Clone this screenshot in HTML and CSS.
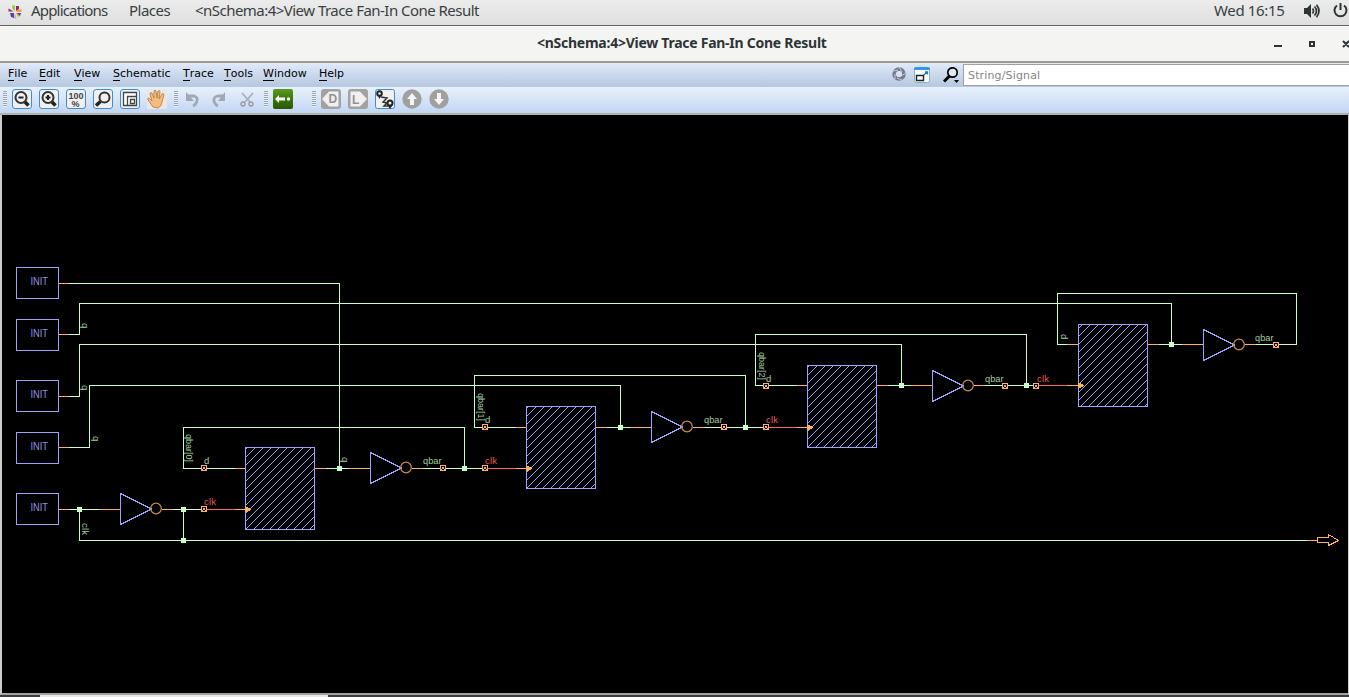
FILE: index.html
```
<!DOCTYPE html>
<html lang="en">
<head>
<meta charset="utf-8">
<title>nSchema</title>
<link rel="stylesheet" href="styles.css">
</head>
<body>
<header class="topbar">
  <svg class="distro" width="14" height="14" viewBox="0 0 14 14">
    <path fill="#9ccc35" d="M4 .5h3v5.500L4.500 4z"/><path fill="#932279" d="M8 1h3v3L8 6z"/>
    <path fill="#efa724" d="M13.500 4v3H8l2-2zM8 8h3l1 3-2 1z"/><path fill="#4b4a9f" d="M13 8 9 8l3 3zM2 8l4 0v5L3 12z"/>
    <path fill="#932279" d="M.5 3.500l5 3H.5z"/><path fill="#d9a0c8" d="M7 8l1.500 5.500H6z"/>
  </svg>
  <span class="apps">Applications</span>
  <span class="places">Places</span>
  <span class="appname">&lt;nSchema:4&gt;View Trace Fan-In Cone Result</span>
  <span class="clock">Wed 16:15</span>
  <svg class="sound" width="16" height="14" viewBox="0 0 16 14"><path fill="#2e3436" d="M0 4h3l4-4v14l-4-4H0z"/><path fill="none" stroke="#2e3436" stroke-width="1.700" d="M8.500 4.500q2 2.500 0 5M10.500 2.500q4 4.500 0 9M12.500.800q5 6.200 0 12.400"/></svg>
  <svg class="power" width="15" height="15" viewBox="0 0 15 15"><path fill="none" stroke="#2e3436" stroke-width="2" d="M4 2.500a6 6 0 1 0 7 0M7.500 0v7"/></svg>
</header>
<div class="titlebar">
  <span class="title">&lt;nSchema:4&gt;View Trace Fan-In Cone Result</span>
  <svg class="winbtns" width="76" height="10" viewBox="0 0 76 10"><path fill="#2e3436" d="M1 6h8v2H1z"/><path fill="none" stroke="#2e3436" stroke-width="2" d="M37 3h4v4h-4zM70 2l6 6M76 2l-6 6"/></svg>
</div>
<nav class="menubar">
  <span class="m file"><u>F</u>ile</span><span class="m edit"><u>E</u>dit</span><span class="m view"><u>V</u>iew</span><span class="m schematic"><u>S</u>chematic</span><span class="m trace"><u>T</u>race</span><span class="m tools"><u>T</u>ools</span><span class="m window"><u>W</u>indow</span><span class="m help"><u>H</u>elp</span>
  <svg class="aperture" width="14" height="15" viewBox="0 0 14 15"><circle cx="7" cy="7" r="4.700" fill="none" stroke="#777b91" stroke-width="4"/><circle cx="7" cy="7" r="3" fill="#dce4f0"/><path stroke="#c7d3e7" stroke-width=".9" d="M7 0l3 5M13.500 6l-4 3M10 13l-5-2M3 12V7M1 4l5-1"/></svg>
  <svg class="dock" width="16" height="16" viewBox="0 0 16 16"><rect x=".5" y=".5" width="15" height="15" rx="2" fill="#f8fafb" stroke="#8dafc5"/><path fill="#3396e8" d="M0 3V2q0-2 2-2h12q2 0 2 2v1z"/><path fill="none" stroke="#222" stroke-width="1.400" d="M2.500 8.500h7v5h-7z"/><path fill="none" stroke="#1b80b8" stroke-width="1.300" d="M10 8l3-3M11 5h2.500v2.500"/></svg>
  <i class="split"></i>
  <svg class="search" width="17" height="16" viewBox="0 0 17 16"><circle cx="9.500" cy="5.500" r="4.700" fill="#dfe9f6" stroke="#000" stroke-width="1.700"/><path stroke="#000" stroke-width="3" d="M6.500 9L1 14.500"/><path d="M11 13h5l-2.500 3z"/></svg>
  <div class="field">String/Signal</div>
</nav>
<div class="toolbar">
  <i class="grip g1"></i>
  <svg class="btn" viewBox="0 0 20 20"><rect class="face" x=".5" y=".5" width="19" height="19" rx="2.500"/><circle class="lens" cx="9" cy="8.500" r="5.500"/><path class="thick" d="M13 13l3.500 3.500"/><path class="bold" d="M6.500 8.500h5"/></svg>
  <svg class="btn" viewBox="0 0 20 20"><rect class="face" x=".5" y=".5" width="19" height="19" rx="2.500"/><circle class="lens" cx="9" cy="8.500" r="5.500"/><path class="thick" d="M13 13l3.500 3.500"/><path class="bold" d="M6.500 8.500h5M9 6v5"/></svg>
  <svg class="btn" viewBox="0 0 20 20"><rect class="face" x=".5" y=".5" width="19" height="19" rx="2.500"/><text class="pct" x="2.500" y="9.500" textLength="15">100</text><text class="pct" x="5.500" y="17.500">%</text></svg>
  <svg class="btn" viewBox="0 0 20 20"><rect class="face" x=".5" y=".5" width="19" height="19" rx="2.500"/><circle class="lens" cx="11.500" cy="8.500" r="5"/><path class="thick" d="M7.500 12.500L3 16.500"/></svg>
  <svg class="btn" viewBox="0 0 20 20"><rect class="face" x=".5" y=".5" width="19" height="19" rx="2.500"/><path fill="#fff" stroke="#444" stroke-width="1.300" d="M3.500 3.500h13v13h-13zM7.500 16V7.500H16M10.500 10.500h4v4h-4z"/></svg>
  <svg class="btn" viewBox="0 0 20 20"><path fill="#ebe7e6" d="M0 0h20v20H0z"/><path fill="#f5bd7b" stroke="#b07840" stroke-width=".8" d="M6 18L1 11q-1-2 1-2l3 3L3 5q0-2 2-1l2 5V2q1-2 2 0l1 7 1-7q2-1 2 1l-1 7 3-5q2-1 2 1l-2 7q0 4-4 6z"/></svg>
  <i class="grip g2"></i>
  <svg class="btn" viewBox="0 0 20 20"><path fill="none" stroke="#9fa9b6" stroke-width="2.800" d="M5 7h6q4 1 3 5t-4 5"/><path fill="#9fa9b6" d="M3 3v9h8z"/></svg>
  <svg class="btn" viewBox="0 0 20 20"><path fill="none" stroke="#9fa9b6" stroke-width="2.800" d="M13 7H8Q3 8 4 12t4 5"/><path fill="#9fa9b6" d="M15 3v9H8z"/></svg>
  <svg class="btn" viewBox="0 0 20 20"><path fill="none" stroke="#a4adb8" stroke-width="1.600" d="M5 4l8 9M16 4L8 13"/><circle cx="6" cy="15" r="2" fill="none" stroke="#999" stroke-width="1.300"/><circle cx="14" cy="15" r="2" fill="none" stroke="#999" stroke-width="1.300"/></svg>
  <i class="grip g3"></i>
  <svg class="btn" viewBox="0 0 20 20"><defs><linearGradient id="gr" x2="0" y2="1"><stop stop-color="#5c9b20"/><stop offset=".5" stop-color="#367808"/><stop offset="1" stop-color="#285703"/></linearGradient></defs><rect width="20" height="20" rx="2" fill="url(#gr)"/><path fill="#fff" d="M2 10l4-4v2.500h6v3H6V14z"/><circle cx="15.500" cy="10" r="1.700" fill="#fff"/></svg>
  <i class="grip g4"></i>
  <svg class="btn" viewBox="0 0 20 20"><rect width="20" height="20" rx="3" fill="#a2a2a2"/><path fill="#f0f0f0" d="M1 10l7-7.500h9.500v15H8z"/><text class="letter" x="7.500" y="14">D</text></svg>
  <svg class="btn" viewBox="0 0 20 20"><rect width="20" height="20" rx="3" fill="#a2a2a2"/><path fill="#f0f0f0" d="M2.500 2.500H12l7 7.500-7 7.500H2.500z"/><text class="letter" x="4" y="15">L</text></svg>
  <svg class="btn" viewBox="0 0 20 20"><rect class="face" x=".5" y=".5" width="19" height="19" rx="2"/><circle cx="4.500" cy="4.500" r="2.300" fill="none" stroke="#222" stroke-width="2"/><path fill="#222" d="M3 7h3l-1.500 3zM13 17h4l-2 3z"/><circle cx="15" cy="14" r="2.500" fill="none" stroke="#222" stroke-width="2"/><path fill="none" stroke="#333" stroke-width="1.500" d="M6 8l6 1-4 4 4 1-3 3h4"/></svg>
  <svg class="btn" viewBox="0 0 20 20"><circle cx="10" cy="10" r="9.700" fill="#a0a0a0"/><path fill="#f5f5f5" d="M10 4l5 6h-3v6H8v-6H5z"/></svg>
  <svg class="btn" viewBox="0 0 20 20"><circle cx="10" cy="10" r="9.700" fill="#a0a0a0"/><path fill="#f5f5f5" d="M10 16l5-6h-3V4H8v6H5z"/></svg>
</div>
<main class="canvas">
<svg class="schematic-view" width="1346" height="578" viewBox="2 115 1346 578">
  <defs>
    <pattern id="hatch" width="8" height="8" patternUnits="userSpaceOnUse"><path fill="#a0a0ff" d="M0 6h1v1H0zM1 5h1v1H1zM2 4h1v1H2zM3 3h1v1H3zM4 2h1v1H4zM5 1h1v1H5zM6 0h1v1H6zM7 7h1v1H7z"/></pattern>
    <g id="init"><path class="blue" d="M.5.500h42v31H.5z"/><text class="lbl init" x="14.500" y="18" textLength="17.500" lengthAdjust="spacingAndGlyphs">INIT</text></g>
    <g id="inv"><path class="blue" d="M.5.500v31L31.500 16z"/><circle class="bubble" cx="36" cy="15.500" r="5.300"/></g>
    <path id="node" fill="#c8ffc8" d="M-2-2h5v5h-5z"/>
    <g id="pin"><path fill="#ffb060" d="M-3-3h6v6h-6z"/><path fill="#000" d="M-2-2h4v1h-4zM-2-1h1v2h-1zM1-1h1v2h-1zM-1 1h2v1h-2z"/></g>
    <path id="clkin" fill="#ffb060" d="M0-2h3v1h2v1h1v1H5v1H3v1H0z"/>
  </defs>
  <use href="#init" x="16" y="267"/><use href="#init" x="16" y="319"/><use href="#init" x="16" y="380"/><use href="#init" x="16" y="432"/><use href="#init" x="16" y="493"/>

  <path class="green" d="M69 283.500H339.500V468.500M69 334.500H79.500V303.500H1171.500V344.500M69 396.500H79.500V344.500H901.500V385.500M69 447.500H89.500V385.500H620.500V427.500"/>
  <path class="green" d="M69 509.500H99M79.500 509.500V540.500H1307M173 509.500H204M183.500 509.500V540.500"/>
  <path class="green" d="M235 468.500H183.500V427.500H464.500V468.500M326 468.500H349M423 468.500H485"/>
  <path class="green" d="M516 427.500H474.500V375.500H745.500V427.500M607 427.500H630M704 427.500H766"/>
  <path class="green" d="M797 385.500H755.500V334.500H1026.500V385.500M888 385.500H911M985 385.500H1036"/>
  <path class="green" d="M1067 344.500H1057.500V293.500H1296.500V344.500H1256M1159 344.500H1182"/>
  <path class="red" d="M207 509.500H235M488 468.500H516M769 427.500H797M1039 385.500H1067"/>
  <path class="orange" d="M59 283.500H69M59 334.500H69M59 396.500H69M59 447.500H69M59 509.500H69M99 509.500H120M162 509.500H173M235 509.500H245M1307 540.500H1317"/>
  <path class="orange" d="M235 468.500H245M315 468.500H326M349 468.500H370M412 468.500H423M516 468.500H526"/>
  <path class="orange" d="M516 427.500H526M596 427.500H607M630 427.500H651M693 427.500H704M797 427.500H807"/>
  <path class="orange" d="M797 385.500H807M877 385.500H888M911 385.500H932M974 385.500H985M1067 385.500H1078"/>
  <path class="orange" d="M1067 344.500H1078M1148 344.500H1159M1182 344.500H1203M1245 344.500H1256"/>

  <rect class="cell" x="245.500" y="447.500" width="69" height="82"/>
  <rect class="cell" x="526.500" y="406.500" width="69" height="82"/>
  <rect class="cell" x="807.500" y="365.500" width="69" height="82"/>
  <rect class="cell" x="1078.500" y="324.500" width="69" height="82"/>
  <use href="#clkin" x="245" y="509"/><use href="#clkin" x="526" y="468"/><use href="#clkin" x="807" y="427"/><use href="#clkin" x="1078" y="385"/>
  <use href="#inv" x="120" y="493"/><use href="#inv" x="370" y="452"/><use href="#inv" x="651" y="411"/><use href="#inv" x="932" y="370"/><use href="#inv" x="1203" y="329"/>
  <use href="#node" x="79" y="509"/><use href="#node" x="183" y="509"/><use href="#node" x="183" y="540"/><use href="#node" x="339" y="468"/><use href="#node" x="464" y="468"/><use href="#node" x="620" y="427"/><use href="#node" x="745" y="427"/><use href="#node" x="901" y="385"/><use href="#node" x="1026" y="385"/><use href="#node" x="1171" y="344"/>
  <use href="#pin" x="204" y="468"/><use href="#pin" x="204" y="509"/><use href="#pin" x="443" y="468"/><use href="#pin" x="485" y="468"/><use href="#pin" x="485" y="427"/><use href="#pin" x="724" y="427"/><use href="#pin" x="766" y="427"/><use href="#pin" x="766" y="386"/><use href="#pin" x="1005" y="386"/><use href="#pin" x="1036" y="386"/><use href="#pin" x="1276" y="345"/>
  <path class="orange" d="M1317.500 537.500H1328.500V534.500L1338.500 540.500L1328.500 545.500V542.500H1317.500z"/>

  <g class="lbl">
    <text x="204" y="464">d</text><text x="485" y="423">d</text><text x="766" y="382">d</text>
    <text x="423" y="464" textLength="18.500" lengthAdjust="spacingAndGlyphs">qbar</text><text x="704" y="423" textLength="18.500" lengthAdjust="spacingAndGlyphs">qbar</text><text x="985" y="382" textLength="18.500" lengthAdjust="spacingAndGlyphs">qbar</text><text x="1255" y="341" textLength="18.500" lengthAdjust="spacingAndGlyphs">qbar</text>
    <text transform="translate(82 323) rotate(90)">q</text><text transform="translate(82 385) rotate(90)">q</text><text transform="translate(93 436) rotate(90)">q</text><text transform="translate(342 457) rotate(90)">q</text>
    <text transform="translate(82 523) rotate(90)" textLength="12">clk</text><text transform="translate(1061 334) rotate(90)">d</text>
    <text transform="translate(186 434) rotate(90)" textLength="28" lengthAdjust="spacingAndGlyphs">qbar[0]</text><text transform="translate(478 393) rotate(90)" textLength="28" lengthAdjust="spacingAndGlyphs">qbar[1]</text><text transform="translate(759 352) rotate(90)" textLength="28" lengthAdjust="spacingAndGlyphs">qbar[2]</text>
    <g class="clk"><text x="204" y="505" textLength="12">clk</text><text x="485" y="464" textLength="12">clk</text><text x="766" y="423" textLength="12">clk</text><text x="1037" y="382" textLength="12">clk</text></g>
  </g>
</svg>
</main>
<footer class="taskbar"><div class="task"></div></footer>
</body>
</html>
```
FILE: styles.css
```
* { box-sizing: border-box; }
body { margin: 0; width: 1349px; height: 697px; overflow: hidden; display: flex; flex-direction: column; background: #000; }
svg { flex: none; display: block; }
span { white-space: nowrap; flex: none; }

.topbar { height: 26px; display: flex; align-items: center; padding: 0 0 4px 8px; overflow: hidden; flex: none;
  background: linear-gradient(#ececec, #dfdfdf); border-bottom: 1px solid #5f605f; font: 15px "Noto Sans", sans-serif; color: #3a3f41; }
.topbar span { line-height: 19px; }
.distro { margin-right: 9px; margin-top: 2px; }
.apps { width: 98px; letter-spacing: -0.85px; }
.apps, .places { letter-spacing: -0.5px; }
.apps { letter-spacing: -0.85px; }
.places { width: 66px; }
.appname { letter-spacing: -0.53px; }
.clock { margin-left: auto; width: 90px; letter-spacing: -0.35px; }
.apps { letter-spacing: -0.82px; }
.sound { margin-right: 13px; }
.power { margin-right: 1px; }

.titlebar { height: 37px; flex: none; display: grid; grid-template-columns: 537px 1fr 76px; align-items: center; padding-bottom: 1px;
  background: #f4f4f3; border-top: 1px solid #fff; border-bottom: 2px solid #9a9b92; }
.title { grid-column: 2; font: bold 14px/20px "Noto Sans", sans-serif; letter-spacing: -0.26px; color: #2e3436; padding-bottom: 1px; }
.winbtns { grid-column: 3; }

.menubar { height: 24px; flex: none; display: flex; align-items: center; padding-left: 8px; overflow: hidden;
  background: linear-gradient(#e0eafa, #b7c8df); border-bottom: 1px solid #b3caea; font: 11px "DejaVu Sans", sans-serif; color: #000; }
.m { height: 17px; line-height: 15px; }
.m u { text-decoration: none; display: inline-block; height: 15px; border-bottom: 1px solid #000; }
.file { width: 31px; } .edit { width: 35px; } .view { width: 39px; } .schematic { width: 70px; }
.trace { width: 41px; } .tools { width: 39px; } .window { width: 56px; } .help { width: 30px; }
.aperture { margin-left: 543px; }
.dock { margin-left: 8px; margin-right: 8px; }
.split { width: 2px; height: 12px; background: #e8edf4; }
.search { margin-left: 5px; margin-right: 3px; }
.field { width: 400px; height: 22px; flex: none; background: #fff; border: 1px solid #a0a0a0; padding: 0 0 0 4px; line-height: 21px; color: #858585; letter-spacing: 0.15px; }

.toolbar { height: 28px; flex: none; display: flex; align-items: center; gap: 7px; padding: 0 0 2px 3px; background: linear-gradient(#e8f1fb, #c2d6f3 26px); border-bottom: 2px solid #b0b0ad; }
.btn { width: 20px; height: 20px; }
.grip { width: 4px; height: 16px; flex: none; background: repeating-linear-gradient(#9ca5af 0 1px, #e9eff7 1px 2px); }
.g1 { margin-right: -2px; }
.g2 { margin-right: -2px; }
.g3 { margin-right: -2px; }
.g4 { margin-left: 12px; margin-right: -2px; }
.face { fill: #f0f0f0; stroke: #3d8dcb; }
.lens { fill: none; stroke: #333; stroke-width: 2; }
.thick { stroke: #222; stroke-width: 3.5; }
.bold { stroke: #222; stroke-width: 2; }
.pct { font: bold 9px "Liberation Sans", sans-serif; fill: #444; }
.letter { font: bold 12px "Liberation Sans", sans-serif; fill: #929292; }

.canvas { height: 580px; flex: none; background: #000; border-left: 2px solid #ccc; border-right: 1px solid #ccc; border-bottom: 2px solid #a3a39c; }
.schematic-view { shape-rendering: crispEdges; }
.blue { fill: none; stroke: #a0a0ff; }
.green { fill: none; stroke: #c8ffc8; }
.red { fill: none; stroke: #ff6464; }
.orange { fill: none; stroke: #ffb060; }
.bubble { fill: none; stroke: #c88c50; stroke-width: 1.2; shape-rendering: geometricPrecision; }
.cell { fill: url(#hatch); stroke: #a0a0ff; }
.lbl { font: 9.5px "Liberation Sans", sans-serif; fill: #a0cca0; }
.init { fill: #9090e8; font-size: 10px; }
.clk { fill: #e85a5a; }

.taskbar { height: 2px; flex: none; background: #3b3e40; padding-left: 40px; }
.task { width: 288px; height: 2px; background: #e8e8e8; }
```
